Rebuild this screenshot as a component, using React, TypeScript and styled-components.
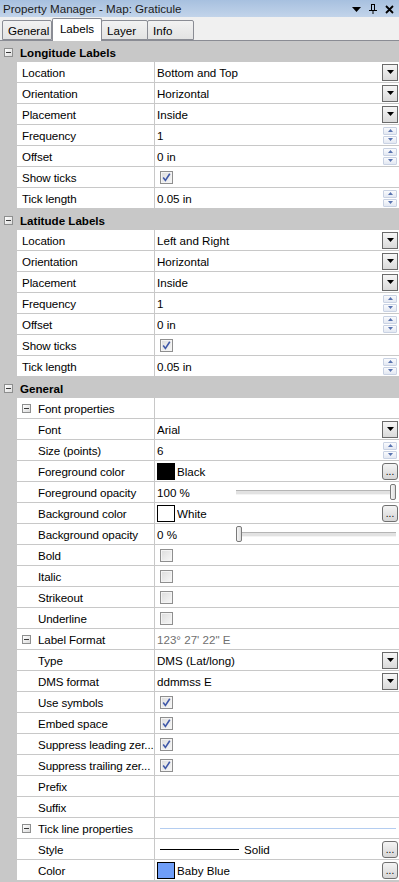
import React from "react";
import styled, { createGlobalStyle } from "styled-components";

const GlobalStyle = createGlobalStyle`
  html, body { margin: 0; padding: 0; background: #c8c8c8; }
  body {
    font-family: "Liberation Sans", Arial, sans-serif;
    font-size: 11.6px;
    color: #000;
  }
`;

type Value =
  | { kind: "dropdown"; text: string }
  | { kind: "spin"; text: string }
  | { kind: "text"; text: string }
  | { kind: "muted"; text: string }
  | { kind: "check"; checked: boolean }
  | { kind: "color"; color: string; text: string; button?: boolean }
  | { kind: "slider"; text: string; at: "start" | "end" }
  | { kind: "line" }
  | { kind: "style" }
  | { kind: "empty" };

type Row =
  | { type: "header"; label: string }
  | { type: "group"; label: string; value: Value }
  | { type: "item"; label: string; value: Value; indent?: boolean };

const axisRows = (location: string): Row[] => [
  { type: "item", label: "Location", value: { kind: "dropdown", text: location } },
  { type: "item", label: "Orientation", value: { kind: "dropdown", text: "Horizontal" } },
  { type: "item", label: "Placement", value: { kind: "dropdown", text: "Inside" } },
  { type: "item", label: "Frequency", value: { kind: "spin", text: "1" } },
  { type: "item", label: "Offset", value: { kind: "spin", text: "0 in" } },
  { type: "item", label: "Show ticks", value: { kind: "check", checked: true } },
  { type: "item", label: "Tick length", value: { kind: "spin", text: "0.05 in" } },
];

const rows: Row[] = [
  { type: "header", label: "Longitude Labels" },
  ...axisRows("Bottom and Top"),
  { type: "header", label: "Latitude Labels" },
  ...axisRows("Left and Right"),
  { type: "header", label: "General" },
  { type: "group", label: "Font properties", value: { kind: "empty" } },
  { type: "item", indent: true, label: "Font", value: { kind: "dropdown", text: "Arial" } },
  { type: "item", indent: true, label: "Size (points)", value: { kind: "spin", text: "6" } },
  { type: "item", indent: true, label: "Foreground color", value: { kind: "color", color: "#000", text: "Black", button: true } },
  { type: "item", indent: true, label: "Foreground opacity", value: { kind: "slider", text: "100 %", at: "end" } },
  { type: "item", indent: true, label: "Background color", value: { kind: "color", color: "#fff", text: "White", button: true } },
  { type: "item", indent: true, label: "Background opacity", value: { kind: "slider", text: "0 %", at: "start" } },
  { type: "item", indent: true, label: "Bold", value: { kind: "check", checked: false } },
  { type: "item", indent: true, label: "Italic", value: { kind: "check", checked: false } },
  { type: "item", indent: true, label: "Strikeout", value: { kind: "check", checked: false } },
  { type: "item", indent: true, label: "Underline", value: { kind: "check", checked: false } },
  { type: "group", label: "Label Format", value: { kind: "muted", text: "123° 27' 22\" E" } },
  { type: "item", indent: true, label: "Type", value: { kind: "dropdown", text: "DMS (Lat/long)" } },
  { type: "item", indent: true, label: "DMS format", value: { kind: "dropdown", text: "ddmmss E" } },
  { type: "item", indent: true, label: "Use symbols", value: { kind: "check", checked: true } },
  { type: "item", indent: true, label: "Embed space", value: { kind: "check", checked: true } },
  { type: "item", indent: true, label: "Suppress leading zer...", value: { kind: "check", checked: true } },
  { type: "item", indent: true, label: "Suppress trailing zer...", value: { kind: "check", checked: true } },
  { type: "item", indent: true, label: "Prefix", value: { kind: "empty" } },
  { type: "item", indent: true, label: "Suffix", value: { kind: "empty" } },
  { type: "group", label: "Tick line properties", value: { kind: "line" } },
  { type: "item", indent: true, label: "Style", value: { kind: "style" } },
  { type: "item", indent: true, label: "Color", value: { kind: "color", color: "#6f9ef8", text: "Baby Blue", button: true } },
];

const Minus: React.FC = () => (
  <MinusBox>
    <svg width="5" height="1" viewBox="0 0 5 1">
      <rect width="5" height="1" fill="#3a3a3a" />
    </svg>
  </MinusBox>
);

const ValueCell: React.FC<{ value: Value }> = ({ value }) => {
  switch (value.kind) {
    case "dropdown":
      return (
        <>
          <ValueText>{value.text}</ValueText>
          <DropButton>
            <svg width="7" height="4" viewBox="0 0 7 4">
              <path d="M0 0h7L3.5 4z" fill="#000" />
            </svg>
          </DropButton>
        </>
      );
    case "spin":
      return (
        <>
          <ValueText>{value.text}</ValueText>
          <Spinner>
            <SpinHalf>
              <svg width="5" height="3" viewBox="0 0 5 3">
                <path d="M0 3h5L2.5 0z" fill="#5873b0" />
              </svg>
            </SpinHalf>
            <SpinHalf>
              <svg width="5" height="3" viewBox="0 0 5 3">
                <path d="M0 0h5L2.5 3z" fill="#5873b0" />
              </svg>
            </SpinHalf>
          </Spinner>
        </>
      );
    case "text":
      return <ValueText>{value.text}</ValueText>;
    case "muted":
      return <ValueText $muted>{value.text}</ValueText>;
    case "check":
      return (
        <CheckBox>
          {value.checked && (
            <svg width="9" height="9" viewBox="0 0 9 9">
              <path d="M1.2 4.6 L3.4 7.4 L7.8 0.8" stroke="#3f58a8" strokeWidth="1.6" fill="none" />
            </svg>
          )}
        </CheckBox>
      );
    case "color":
      return (
        <>
          <Swatch $color={value.color} />
          <ValueText>{value.text}</ValueText>
          {value.button && <DotsButton>...</DotsButton>}
        </>
      );
    case "slider":
      return (
        <>
          <SliderText>{value.text}</SliderText>
          <SliderTrack $at={value.at}>
            <Thumb />
          </SliderTrack>
        </>
      );
    case "line":
      return <ThinBlueLine />;
    case "style":
      return (
        <>
          <StyleLine />
          <ValueText>Solid</ValueText>
          <DotsButton>...</DotsButton>
        </>
      );
    default:
      return null;
  }
};

const App: React.FC = () => {
  return (
    <>
      <GlobalStyle />
      <Panel>
        <TitleBar>
          <Title>Property Manager - Map: Graticule</Title>
          <TitleIcons>
            <svg width="9" height="5" viewBox="0 0 9 5">
              <path d="M0 0h9L4.5 5z" fill="#000" />
            </svg>
            <svg width="8" height="10" viewBox="0 0 8 10">
              <path d="M2 0h4v6H2zM0 6h8v1H0zM3.5 7h1v3h-1z" fill="#000" />
              <rect x="3" y="1" width="2" height="5" fill="#b3cae6" />
            </svg>
            <svg width="9" height="9" viewBox="0 0 9 9">
              <path d="M1 1L8 8M8 1L1 8" stroke="#000" strokeWidth="1.8" />
            </svg>
          </TitleIcons>
        </TitleBar>
        <TabStrip>
          <Tab $first>General</Tab>
          <Tab $active>Labels</Tab>
          <Tab>Layer</Tab>
          <Tab>Info</Tab>
        </TabStrip>
        <Grid>
          {rows.map((row, i) => {
            if (row.type === "header") {
              return (
                <HeaderRow key={i}>
                  <Minus />
                  <HeaderLabel>{row.label}</HeaderLabel>
                </HeaderRow>
              );
            }
            return (
              <PropRow key={i}>
                <Margin />
                <LabelCell $indent={row.type === "item" && !!row.indent}>
                  {row.type === "group" && <Minus />}
                  <LabelText>{row.label}</LabelText>
                </LabelCell>
                <ValueCellBox>
                  <ValueCell value={row.value} />
                </ValueCellBox>
              </PropRow>
            );
          })}
        </Grid>
      </Panel>
    </>
  );
};

export default App;

const Panel = styled.div`
  width: 399px;
  height: 882px;
  overflow: hidden;
  display: flex;
  flex-direction: column;
  background: #c8c8c8;
`;

const TitleBar = styled.div`
  height: 17px;
  flex: none;
  display: flex;
  align-items: center;
  justify-content: space-between;
  padding: 0 5px 0 3px;
  background: linear-gradient(to bottom, #a7c0df, #c2d4ea);
`;

const Title = styled.span`
  color: #1b1b1b;
  white-space: nowrap;
`;

const TitleIcons = styled.div`
  display: flex;
  align-items: center;
  gap: 8px;
  padding-top: 1px;
`;

const TabStrip = styled.div`
  height: 23px;
  flex: none;
  display: flex;
  align-items: flex-end;
  padding-left: 2px;
  background: #f0f0f0;
  border-bottom: 1px solid #8a8c94;
`;

const Tab = styled.div<{ $active?: boolean; $first?: boolean }>`
  height: ${({ $active }) => ($active ? "23px" : "20px")};
  width: ${({ $active, $first }) => ($active || $first ? "50px" : "47px")};
  margin-left: ${({ $active, $first }) => ($active || $first ? "0" : "-1px")};
  margin-bottom: ${({ $active }) => ($active ? "-1px" : "0")};
  box-sizing: border-box;
  display: flex;
  align-items: center;
  justify-content: ${({ $active }) => ($active ? "center" : "flex-start")};
  padding-left: ${({ $active }) => ($active ? "0" : "5px")};
  padding-bottom: ${({ $active }) => ($active ? "3px" : "0")};
  border: 1px solid #8a8c94;
  border-bottom: ${({ $active }) => ($active ? "none" : "1px solid #8a8c94")};
  border-radius: 2px 2px 0 0;
  background: ${({ $active }) =>
    $active ? "#fff" : "linear-gradient(to bottom, #f2f2f2, #e3e3e3)"};
  position: relative;
  z-index: ${({ $active }) => ($active ? 1 : 0)};
  white-space: nowrap;
`;

const Grid = styled.div`
  display: flex;
  flex-direction: column;
`;

const HeaderRow = styled.div`
  height: 21px;
  box-sizing: border-box;
  padding-top: 1px;
  display: flex;
  align-items: center;
  padding-left: 4px;
  gap: 7px;
  background: #c8c8c8;
`;

const HeaderLabel = styled.span`
  font-weight: bold;
`;

const MinusBox = styled.span`
  width: 9px;
  height: 9px;
  box-sizing: border-box;
  flex: none;
  display: inline-flex;
  align-items: center;
  justify-content: center;
  border: 1px solid #8e8f8f;
  background: linear-gradient(to bottom right, #ffffff, #dcdcdc);
`;

const PropRow = styled.div`
  height: 21px;
  flex: none;
  display: flex;
`;

const Margin = styled.div`
  width: 17px;
  flex: none;
  background: #c8c8c8;
`;

const LabelCell = styled.div<{ $indent: boolean }>`
  width: 138px;
  flex: none;
  box-sizing: border-box;
  display: flex;
  align-items: center;
  gap: 7px;
  padding-top: 1px;
  padding-left: ${({ $indent }) => ($indent ? "19px" : "3px")};
  background: #fff;
  border-right: 1px solid #c8c8c8;
  border-bottom: 1px solid #c8c8c8;
  overflow: hidden;
  & > span:first-child {
    margin-left: 2px;
  }
`;

const LabelText = styled.span`
  flex: none;
  white-space: nowrap;
  letter-spacing: -0.1px;
`;

const ValueCellBox = styled.div`
  flex: 1;
  min-width: 0;
  box-sizing: border-box;
  display: flex;
  align-items: center;
  padding: 0 1px 0 2px;
  background: #fff;
  border-bottom: 1px solid #c8c8c8;
`;

const ValueText = styled.span<{ $muted?: boolean }>`
  flex: 1;
  padding-top: 1px;
  white-space: nowrap;
  overflow: hidden;
  color: ${({ $muted }) => ($muted ? "#707070" : "#000")};
`;

const DropButton = styled.div`
  width: 16px;
  height: 17px;
  box-sizing: border-box;
  flex: none;
  display: flex;
  align-items: center;
  justify-content: center;
  border: 1px solid #6b6b6b;
  background: linear-gradient(to bottom, #f6f6f6, #dadada);
`;

const Spinner = styled.div`
  width: 14px;
  height: 17px;
  flex: none;
  margin-right: 1px;
  display: flex;
  flex-direction: column;
  gap: 1px;
`;

const SpinHalf = styled.div`
  flex: 1;
  display: flex;
  align-items: center;
  justify-content: center;
  border: 1px solid #c9d2e3;
  border-radius: 1px;
  background: linear-gradient(to bottom, #fafbfd, #e3e8f2);
`;

const CheckBox = styled.div`
  width: 13px;
  height: 13px;
  margin-left: 3px;
  box-sizing: border-box;
  display: flex;
  align-items: center;
  justify-content: center;
  border: 1px solid #8f8f8f;
  background: linear-gradient(to bottom right, #dcdcdc, #f8f8f8);
  box-shadow: inset 0 0 0 1px #f4f4f4;
`;

const Swatch = styled.div<{ $color: string }>`
  width: 18px;
  height: 17px;
  flex: none;
  box-sizing: border-box;
  margin-right: 2px;
  border: 1px solid #000;
  background: ${({ $color }) => $color};
`;

const DotsButton = styled.div`
  width: 16px;
  height: 17px;
  flex: none;
  box-sizing: border-box;
  display: flex;
  align-items: flex-end;
  justify-content: center;
  padding-bottom: 3px;
  font-size: 10px;
  line-height: 8px;
  border: 1px solid #707070;
  border-radius: 3px;
  background: linear-gradient(to bottom, #f4f4f4, #d6d6d6);
`;

const SliderText = styled.span`
  width: 79px;
  flex: none;
  padding-top: 1px;
  white-space: nowrap;
`;

const SliderTrack = styled.div<{ $at: "start" | "end" }>`
  flex: 1;
  height: 3px;
  margin-right: 2px;
  display: flex;
  align-items: center;
  justify-content: ${({ $at }) => ($at === "end" ? "flex-end" : "flex-start")};
  border-top: 1px solid #b5b5b5;
  border-bottom: 1px solid #f4f4f4;
  background: #e2e2e2;
`;

const Thumb = styled.div`
  width: 6px;
  height: 16px;
  box-sizing: border-box;
  border: 1px solid #7a7a7a;
  border-radius: 2px;
  background: linear-gradient(to right, #f6f6f6, #dcdcdc);
`;

const ThinBlueLine = styled.div`
  flex: 1;
  height: 1px;
  margin: 0 2px 0 3px;
  background: #b4cdf0;
`;

const StyleLine = styled.div`
  width: 79px;
  height: 1px;
  flex: none;
  margin: 0 5px 0 3px;
  background: #000;
`;
